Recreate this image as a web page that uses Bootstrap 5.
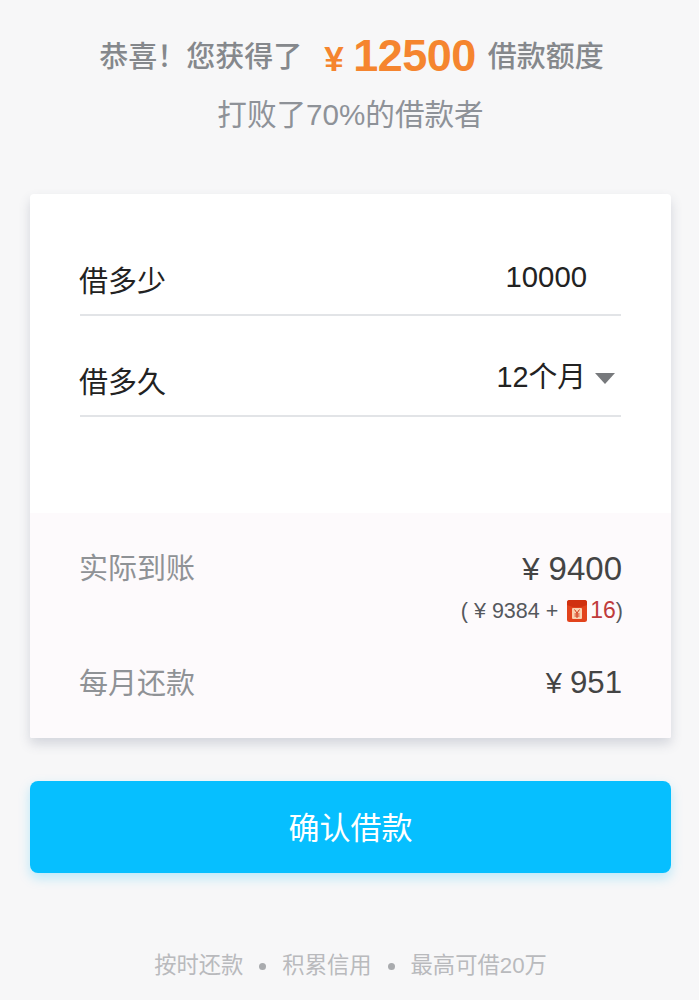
<!DOCTYPE html>
<html lang="zh">
<head>
<meta charset="utf-8">
<link href="https://cdn.jsdelivr.net/npm/bootstrap@5.3.0/dist/css/bootstrap.min.css" rel="stylesheet">
<style>
html,body{height:1000px;overflow:hidden}
body{background:#f7f7f8;font-family:"Liberation Sans","Noto Sans CJK SC",sans-serif;color:#222}
.shell{padding:0 28px 0 30px}
.hero{height:194px;padding-top:33px;text-align:center}
.hero-a{font-size:29px;line-height:46px;height:46px;color:#85888c;font-weight:500;white-space:nowrap;margin-left:2px}
.hero-amt{color:#f5852f;font-weight:700;font-size:45px;line-height:1;vertical-align:-4px;margin:0 12px 0 22px;letter-spacing:-.5px}
.hero-yen{font-size:35px;margin-right:10px}
.hero-b{font-size:29.6px;line-height:40px;margin-top:16px;color:#8e9298}
.sheet{height:544px;background:#fff;border:0;border-radius:4px 4px 2px 2px;box-shadow:0 6px 12px rgba(70,80,110,.2)}
.inputs{height:319px;padding:51px 50px 0 49px}
.field{height:71px;font-size:29px;border-bottom:2px solid #e2e4e7;margin-bottom:30px;padding-bottom:16px;align-items:flex-end;margin-left:1px}
.field-name{margin-bottom:-6px;margin-left:-1px}
.field .val{color:#222;line-height:40px;padding-bottom:3px;font-size:29.3px}
.field .val-top{margin-bottom:-2px;margin-right:34px}
.field .val-low{margin-bottom:-1px;font-size:28.8px}
.caret-s{width:0;height:0;border-left:10.5px solid transparent;border-right:10.5px solid transparent;border-top:11px solid #77797c;margin-left:9px;margin-right:6px;margin-bottom:15px}
.result{height:225px;background:#fdfafc;padding:34px 49px 0 49px;font-size:29px;color:#8f9296}
.result-row{line-height:44px}
.money{color:#444;font-size:33px}
.money-sm{font-size:31.2px;line-height:42px}
.money i{font-style:normal;font-size:31px;margin-right:9px}
.money-sm i{font-size:29px;margin-right:8px}
.note{font-size:21.5px;line-height:32px;color:#55585c;height:69px;padding-top:2px;margin-top:1px;margin-right:-1px}
.note b{font-weight:400;color:#bf3b3b;font-size:23px;line-height:1}
.redpack{margin:0 3px 0 3px;vertical-align:-4px}
.go{height:92px;margin-top:43px;padding-top:10px;width:100%;background:#06bfff;border:0;border-radius:8px;color:#fff;font-size:31px;box-shadow:0 5px 12px rgba(6,191,255,.25)}
.go:hover{background:#06bfff;color:#fff}
.foot{margin-top:73px;font-size:22.3px;line-height:40px;color:#b9babd;gap:16px}
.dot{width:7px;height:7px;border-radius:50%;background:#a9abae}
</style>
</head>
<body>
<div class="shell">
  <div class="hero">
    <div class="hero-a">恭喜！您获得了<span class="hero-amt"><span class="hero-yen">¥</span>12500</span>借款额度</div>
    <div class="hero-b">打败了70%的借款者</div>
  </div>
  <div class="card sheet overflow-hidden">
    <div class="inputs">
      <div class="field d-flex justify-content-between">
        <span class="field-name">借多少</span><span class="val val-top">10000</span>
      </div>
      <div class="field d-flex justify-content-between">
        <span class="field-name">借多久</span><span class="d-flex align-items-end"><span class="val val-low">12个月</span><span class="caret-s"></span></span>
      </div>
    </div>
    <div class="result">
      <div class="result-row d-flex justify-content-between"><span>实际到账</span><span class="money"><i>¥</i>9400</span></div>
      <div class="note text-end">( ¥ 9384 + <svg class="redpack" width="20" height="22" viewBox="0 0 20 22"><rect width="20" height="22" rx="2.5" fill="#e2431c"/><path d="M0 2.5Q0 0 2.5 0H17.5Q20 0 20 2.5V5Q10 9.5 0 5Z" fill="#d0310f"/><rect x="5" y="8" width="10" height="11" rx="1" fill="#f9d2b0"/><path d="M7.5 9.5L10 13L12.5 9.5M10 13V18M7.5 14H12.5M7.5 16H12.5" stroke="#d23a18" stroke-width="1" fill="none"/></svg><b>16</b>)</div>
      <div class="result-row d-flex justify-content-between"><span>每月还款</span><span class="money money-sm"><i>¥</i>951</span></div>
    </div>
  </div>
  <button type="button" class="btn go">确认借款</button>
  <div class="foot d-flex justify-content-center align-items-center">
    <span>按时还款</span><span class="dot"></span><span>积累信用</span><span class="dot"></span><span>最高可借20万</span>
  </div>
</div>
</body>
</html>
